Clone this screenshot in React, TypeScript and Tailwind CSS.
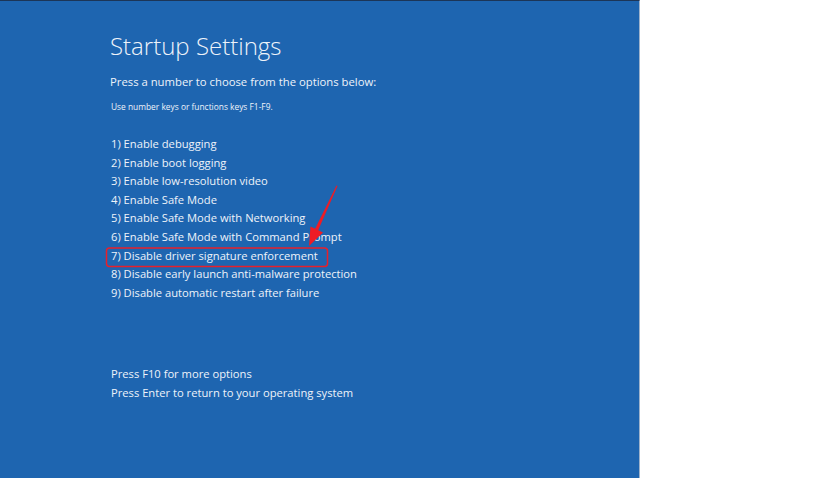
const options = [
  '1) Enable debugging',
  '2) Enable boot logging',
  '3) Enable low-resolution video',
  '4) Enable Safe Mode',
  '5) Enable Safe Mode with Networking',
  '6) Enable Safe Mode with Command Prompt',
  '7) Disable driver signature enforcement',
  '8) Disable early launch anti-malware protection',
  '9) Disable automatic restart after failure',
];

export default function App() {
  return (
    <div className="flex w-[819px] h-[478px] bg-white overflow-hidden">
      {/* blue boot screen */}
      <div
        className="relative w-[640px] h-full bg-[#1e65b0] border-t border-[#1c3557] border-r-[1.5px] border-r-[#9fb3cb] text-[#eef3fa] pl-[110px] pt-[29px]"
        style={{ fontFamily: '"Open Sans", "Noto Sans", sans-serif' }}
      >
        <h1 className="text-[24px] leading-[32px] font-light">Startup Settings</h1>
        <p className="mt-[11px] text-[11.3px] leading-[18px]">
          Press a number to choose from the options below:
        </p>
        <p className="mt-[9px] ml-[1px] text-[8.4px] leading-[14px]">
          Use number keys or functions keys F1-F9.
        </p>

        <ul className="mt-[21px] ml-[1px] text-[11.2px] leading-[18.6px]">
          {options.map((o, i) => (
            <li key={i}>{o}</li>
          ))}
        </ul>

        <div className="mt-[63px] ml-[1px] text-[11.2px] leading-[18.6px]">
          <p>Press F10 for more options</p>
          <p>Press Enter to return to your operating system</p>
        </div>

        {/* red annotation: box + arrow */}
        <svg
          className="absolute left-0 top-0 pointer-events-none"
          width="638"
          height="478"
          viewBox="0 0 638 478"
        >
          <rect
            x="106.5"
            y="247"
            width="221"
            height="18.5"
            rx="3"
            fill="none"
            stroke="#e8202a"
            strokeWidth="1.5"
          />
          <polygon
            points="337.5,185 336.5,184.6 315,228 318,229.5"
            fill="#ee1c25"
          />
          <polygon points="310.5,225.5 323,231.5 309,245" fill="#ee1c25" />
        </svg>
      </div>
    </div>
  );
}
